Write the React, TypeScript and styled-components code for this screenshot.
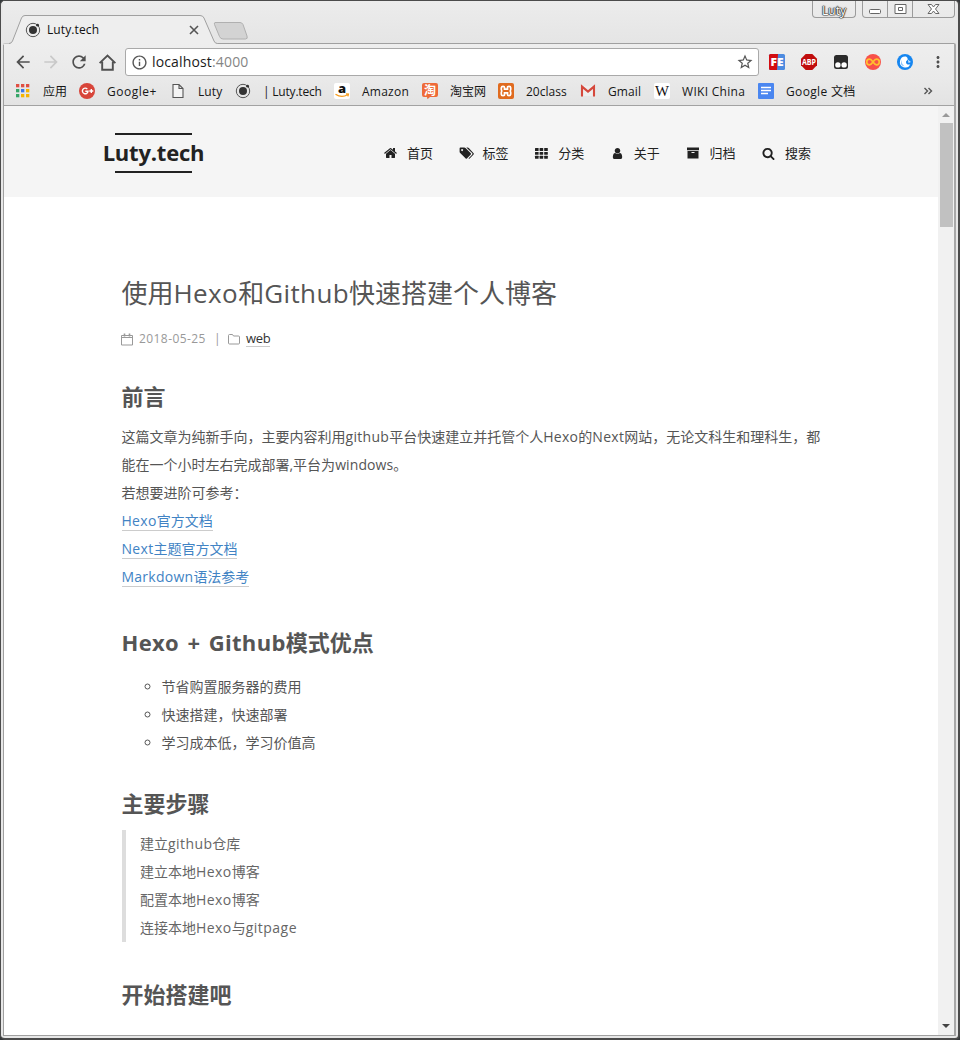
import React from 'react';
import styled, { createGlobalStyle } from 'styled-components';
import { MdArrowBack, MdArrowForward, MdRefresh, MdInfoOutline, MdStarBorder, MdMoreVert } from 'react-icons/md';

const GlobalStyle = createGlobalStyle`
  * { box-sizing: border-box; }
  html, body { margin: 0; padding: 0; }
  body {
    background: #34383a;
    font-family: "Open Sans", "Noto Sans CJK SC", sans-serif;
    overflow: hidden;
  }
  svg { display: block; flex: none; overflow: visible; }
`;

const Window = styled.div`
  width: 960px;
  height: 1040px;
  background: #e7e7e7;
  border: 1px solid #4b4b4b;
  border-right-width: 2px;
  border-bottom-width: 2px;
  border-radius: 5px;
  display: flex;
  flex-direction: column;
  padding: 0 2px 2px;
  overflow: hidden;
`;

const TitleBar = styled.div`
  height: 42px;
  display: flex;
  align-items: flex-start;
  flex: none;
  background: linear-gradient(#ececec, #e5e5e5);
`;

const TabArea = styled.div`
  position: relative;
  width: 250px;
  height: 43px;
  z-index: 1;
`;

const TabShape = styled.svg`
  position: absolute;
  left: 0;
  top: 0;
`;

const TabContent = styled.div`
  position: relative;
  display: flex;
  align-items: center;
  padding: 20px 0 0 22px;
  height: 38px;
`;

const TabTitle = styled.span`
  flex: none;
  width: 142px;
  margin-left: 6px;
  font-size: 12px;
  line-height: 18px;
  color: #111;
  letter-spacing: 0.1px;
`;

const Spacer = styled.div`
  flex: 1;
`;

const UserButton = styled.div`
  width: 44px;
  height: 17px;
  margin-right: 6px;
  border: 1px solid #9b9b9b;
  border-top: 0;
  border-radius: 0 0 4px 4px;
  font-size: 12px;
  line-height: 19px;
  text-align: center;
  color: #fff;
  text-shadow: 0 0 1px #222, 0 0 1px #222, 0 0 1px #222, 0 0 1px #222, 0 0 2px #444;
`;

const Controls = styled.div`
  display: flex;
  height: 17px;
  margin-right: 1px;
  border: 1px solid #9b9b9b;
  border-top: 0;
  border-radius: 0 0 4px 4px;
`;

const Control = styled.div<{ $w: number }>`
  width: ${p => p.$w}px;
  display: flex;
  justify-content: center;
  padding-top: 2px;
  & + & { border-left: 1px solid #9b9b9b; }
`;

const Frame = styled.div`
  flex: 1;
  min-height: 0;
  display: flex;
  flex-direction: column;
  border: 1px solid #a0a0a0;
  border-right: 2px solid #a8a8a8;
  background: #ebebeb;
  border-radius: 2px 2px 0 0;
`;

const Toolbar = styled.div`
  display: flex;
  align-items: center;
  height: 36px;
  padding-left: 9px;
  flex: none;
  color: #4f4f4f;
  background: linear-gradient(#eeeeee, #e9e9e9);
`;

const ToolButton = styled.div<{ $dim?: boolean; $inset?: number }>`
  width: 28px;
  height: 20px;
  display: flex;
  align-items: center;
  padding-left: ${p => p.$inset ?? 0}px;
  color: ${p => (p.$dim ? '#c9c9c9' : '#505050')};
`;

const AddressBar = styled.div`
  width: 634px;
  height: 28px;
  display: flex;
  align-items: center;
  background: #fff;
  border: 1px solid #a9a9a9;
  border-radius: 3px;
  padding: 0 4px 0 5px;
  color: #555;
`;

const Url = styled.div`
  flex: 1;
  margin-left: 4px;
  font-size: 14px;
  line-height: 24px;
  letter-spacing: 0.15px;
  color: #1b1b1b;
  span { color: #858585; }
`;

const Extensions = styled.div`
  display: flex;
  gap: 16px;
  margin-left: 10px;
  align-items: center;
`;

const Bookmarks = styled.div`
  display: flex;
  align-items: center;
  height: 26px;
  padding: 0 0 4px 11px;
  flex: none;
  border-bottom: 1px solid #a2a2a2;
  background: linear-gradient(#e9e9e9, #e3e3e3);
`;

const Bookmark = styled.div<{ $w: number }>`
  width: ${p => p.$w}px;
  display: flex;
  align-items: center;
  gap: 12px;
  flex: none;
  height: 20px;
`;

const BookmarkLabel = styled.span<{ $ls?: number }>`
  font-size: 12px;
  line-height: 18px;
  padding-top: 2px;
  white-space: nowrap;
  color: #161616;
  letter-spacing: ${p => p.$ls ?? 0}px;
`;

const Viewport = styled.div`
  flex: 1;
  min-height: 0;
  display: flex;
  background: #fff;
`;

const Page = styled.div`
  width: 934px;
  display: flex;
  flex-direction: column;
`;

const Scrollbar = styled.div`
  flex: 1;
  background: #f1f1f1;
  display: flex;
  flex-direction: column;
  align-items: center;
  justify-content: space-between;
  padding-bottom: 7px;
`;

const ScrollTop = styled.div`
  display: flex;
  flex-direction: column;
  align-items: center;
  padding-top: 7px;
`;

const Thumb = styled.div`
  width: 13px;
  height: 104px;
  margin-top: 6px;
  background: #c1c1c1;
`;

const Header = styled.header`
  height: 91px;
  flex: none;
  background: #f5f5f5;
  display: flex;
  padding: 27px 0 0 99px;
`;

const Brand = styled.div`
  width: 101px;
  display: flex;
  flex-direction: column;
  align-items: center;
`;

const BrandLine = styled.div`
  width: 77px;
  height: 2px;
  background: #222;
`;

const BrandName = styled.div`
  font-size: 22px;
  font-weight: 700;
  height: 36px;
  line-height: 34px;
  color: #222;
  white-space: nowrap;
  letter-spacing: -0.2px;
`;

const Nav = styled.nav`
  display: flex;
  margin: 11px 0 0 177.5px;
`;

const NavItem = styled.a`
  width: 75.6px;
  height: 18px;
  display: flex;
  align-items: center;
  gap: 7.5px;
  font-size: 13px;
  line-height: 18px;
  color: #222;
`;

const NavIcon = styled.span`
  width: 18px;
  display: flex;
  justify-content: center;
`;

const Article = styled.article`
  padding: 76px 0 0 117.5px;
  color: #555;
  font-size: 14px;
  line-height: 28px;
`;

const Latin = styled.span<{ $ls?: number }>`
  letter-spacing: ${p => p.$ls ?? 0.3}px;
`;

const Title = styled.h1`
  margin: 0;
  font-size: 26px;
  font-weight: 400;
  line-height: 40px;
  color: #555;
  white-space: nowrap;
`;

const Meta = styled.div`
  display: flex;
  align-items: center;
  height: 20px;
  margin-top: 16px;
  margin-left: -0.5px;
  font-size: 12px;
  line-height: 16px;
  color: #999;
`;

const MetaDate = styled.span`
  margin-left: 6px;
  width: 75px;
  letter-spacing: 0.42px;
`;

const MetaDivider = styled.span`
  width: 14px;
`;

const Category = styled.a`
  margin-left: 6px;
  color: #333;
  font-size: 13px;
  height: 16px;
  line-height: 14px;
  letter-spacing: -0.3px;
  border-bottom: 1px solid #ccc;
`;

const Heading = styled.h2<{ $top: number; $bottom: number }>`
  margin: ${p => p.$top}px 0 ${p => p.$bottom}px;
  font-size: 22px;
  font-weight: 700;
  line-height: 33px;
  word-spacing: 2.5px;
  color: #555;
`;

const Text = styled.p`
  margin: 0;
  white-space: nowrap;
`;

const Link = styled.a`
  display: block;
  width: max-content;
  height: 20px;
  margin: 4px 0 8px;
  line-height: 20px;
  color: #4183c4;
  border-bottom: 1px solid #ccc;
`;

const List = styled.ul`
  margin: 0;
  padding-left: 40px;
  list-style: circle;
`;

const Quote = styled.blockquote`
  margin: 0;
  padding-left: 14.6px;
  border-left: 4px solid #ddd;
  color: #666;
`;

const LutyIcon = () => (
  <svg width="16" height="16" viewBox="0 0 16 16">
    <circle cx="8" cy="8" r="6.7" fill="none" stroke="#555" strokeWidth="1" />
    <circle cx="8" cy="8" r="4" fill="#333" />
    <circle cx="12.6" cy="3.2" r="1.4" fill="#333" />
  </svg>
);

const HomeOutline = () => (
  <svg width="17" height="17" viewBox="0 0 16 16" fill="none" stroke="#505050" strokeWidth="1.8">
    <path d="M.6 8.600 8 1.500l7.400 7.100M3 7.200v7.600h10V7.200" />
  </svg>
);

const appColors = ['#e04f43', '#e04f43', '#e04f43', '#35a567', '#3b78e7', '#f5b400', '#35a567', '#f5b400', '#f5b400'];
const AppsIcon = () => (
  <svg width="16" height="16" viewBox="0 0 16 16">
    {appColors.map((c, i) => (
      <rect key={i} x={1 + (i % 3) * 5} y={1 + Math.floor(i / 3) * 5} width="3.3" height="3.3" fill={c} />
    ))}
  </svg>
);

const GPlusIcon = () => (
  <svg width="16" height="16" viewBox="0 0 16 16">
    <circle cx="8" cy="8" r="8" fill="#d8453a" />
    <path d="M8.300 6.100a2.800 2.800 0 1 0 .7 2.100H6.300M10.300 8h4M12.300 6v4" fill="none" stroke="#fff" strokeWidth="1.400" />
  </svg>
);

const FileIcon = () => (
  <svg width="16" height="16" viewBox="0 0 16 16">
    <path d="M3 1.500h6l4 4v9H3zM9 1.500v4h4" fill="#f4f4f4" stroke="#555" strokeWidth="1.100" />
  </svg>
);

const AmazonIcon = () => (
  <svg width="16" height="16" viewBox="0 0 16 16">
    <rect width="16" height="16" rx="2" fill="#fff" />
    <text x="8" y="9.800" textAnchor="middle" fontFamily="Open Sans" fontWeight="800" fontSize="13" fill="#111">a</text>
    <path d="M1.500 11.200q6 4.200 12 .6M12 10.800l2.400.3-.5 2.200" fill="none" stroke="#f79c1c" strokeWidth="1.300" />
  </svg>
);

const TaobaoIcon = () => (
  <svg width="16" height="16" viewBox="0 0 16 16">
    <path d="M2 0h12q2 0 2 2v10q0 2-2 2H8l-2.500 2.200L5 14H2q-2 0-2-2V2q0-2 2-2z" fill="#ee6a38" />
    <text x="8" y="11.500" textAnchor="middle" fontFamily="Noto Sans CJK SC" fontWeight="700" fontSize="12" fill="#fff">淘</text>
  </svg>
);

const XamppIcon = () => (
  <svg width="16" height="16" viewBox="0 0 16 16">
    <rect width="16" height="16" rx="2" fill="#e06b1f" />
    <path d="M6.500 6.200V4.500Q6.500 3.300 5 3.300T3.300 4.800v1.700q0 1.500 1.200 1.500-1.200 0-1.200 1.500v1.700q0 1.500 1.700 1.500t1.500-1.200V9.800h3v1.700q0 1.200 1.500 1.200t1.700-1.500V9.500q0-1.500-1.200-1.500 1.200 0 1.200-1.500V4.800q0-1.500-1.700-1.500T9.500 4.500v1.700z" fill="none" stroke="#fff" strokeWidth="1.700" />
  </svg>
);

const GmailIcon = () => (
  <svg width="16" height="16" viewBox="0 0 16 16">
    <path d="M2 3h12v10H2z" fill="#eee" />
    <path d="M2 13.500V3.600l6 5 6-5v9.900" fill="none" stroke="#d5483c" strokeWidth="2.100" />
  </svg>
);

const WikiIcon = () => (
  <svg width="16" height="16" viewBox="0 0 16 16">
    <rect width="16" height="16" rx="2" fill="#fff" />
    <text x="8" y="12.500" textAnchor="middle" fontFamily="Liberation Serif" fontSize="14" textLength="14" lengthAdjust="spacingAndGlyphs" fill="#111">W</text>
  </svg>
);

const DocsIcon = () => (
  <svg width="16" height="16" viewBox="0 0 16 16">
    <rect width="16" height="16" rx="1" fill="#4a86f0" />
    <path d="M3 4.500h10M3 7.500h10M3 10.500h7" stroke="#fff" strokeWidth="1.300" />
  </svg>
);

const FeIcon = () => (
  <svg width="16" height="16" viewBox="0 0 16 16">
    <rect width="16" height="16" rx="1.500" fill="#4d8be0" />
    <path d="M1.500 0H9l-1 16H1.500Q0 16 0 14.500v-13Q0 0 1.500 0z" fill="#d30d12" />
    <text x="8" y="12" textAnchor="middle" fontFamily="Open Sans" fontWeight="800" fontSize="11" textLength="13" lengthAdjust="spacingAndGlyphs" fill="#fff">FE</text>
  </svg>
);

const AbpIcon = () => (
  <svg width="16" height="16" viewBox="0 0 16 16">
    <path d="M4.700 0h6.600L16 4.700v6.600L11.300 16H4.700L0 11.300V4.700z" fill="#c00d0d" />
    <text x="8" y="10.900" textAnchor="middle" fontFamily="Open Sans" fontWeight="700" fontSize="8" textLength="14" lengthAdjust="spacingAndGlyphs" fill="#fff">ABP</text>
  </svg>
);

const MonkeyIcon = () => (
  <svg width="16" height="16" viewBox="0 0 16 16">
    <rect x="1" y="1" width="14" height="14" rx="2.500" fill="#2b2b2b" />
    <circle cx="4.900" cy="10.900" r="2.700" fill="#fff" />
    <circle cx="11.100" cy="10.900" r="2.700" fill="#fff" />
  </svg>
);

const InfinityIcon = () => (
  <svg width="16" height="16" viewBox="0 0 16 16">
    <circle cx="8" cy="8" r="8" fill="#f8504a" />
    <path d="M8 8C6.800 6.300 6 5.200 4.500 5.200a2.800 2.800 0 0 0 0 5.600C6 10.800 6.800 9.700 8 8s2-2.800 3.500-2.800a2.800 2.800 0 0 1 0 5.600C10 10.800 9.200 9.700 8 8z" fill="none" stroke="#ffc02e" strokeWidth="1.700" />
  </svg>
);

const BirdIcon = () => (
  <svg width="16" height="16" viewBox="0 0 16 16">
    <circle cx="8" cy="8" r="8" fill="#1686f0" />
    <path d="M9 2.500a5.500 5.500 0 1 0 4.300 8H10.500Q8.500 9.500 9 7.500l1.800-2q0-2-1.800-3z" fill="#fff" />
    <path d="M6 3.500q-3.500 4.500 1.500 9Q1 11 6 3.500z" fill="#8cc5fb" />
    <path d="M10.800 5.500 14 8l-2.500 1z" fill="#bfe0ff" />
  </svg>
);

const FaHome = () => (
  <svg width="14" height="14" viewBox="0 0 1792 1792" fill="#222">
    <path d="M1408 992v480q0 26-19 45t-45 19h-384v-384h-256v384h-384q-26 0-45-19t-19-45v-480q0-1 .5-3t.5-3l575-474 575 474q1 2 1 6zm223-69l-62 74q-8 9-21 11h-3q-13 0-21-7l-692-577-692 577q-12 8-24 7-13-2-21-11l-62-74q-8-10-7-23.500t11-21.500l719-599q32-26 76-26t76 26l244 204v-195q0-14 9-23t23-9h192q14 0 23 9t9 23v408l219 182q10 8 11 21.500t-7 23.500z" />
  </svg>
);

const FaTags = () => (
  <svg width="15" height="14" viewBox="0 0 15 14" fill="#222">
    <path fillRule="evenodd" d="M1.500 1.500h3.800q.7 0 1.200.5l5.300 5.300q.6.600 0 1.200l-3.900 3.900q-.6.600-1.200 0L1.200 7Q.600 6.400.6 5.700V2.400q0-.9.9-.9zM3.100 3a1 1 0 1 0 .01 0zM7.300 1.500h1.300q.7 0 1.200.5L14.600 7.300q.6.600 0 1.200l-3.900 3.900q-.6.500-1.200.1l3.600-3.800q.8-.8 0-1.600z" />
  </svg>
);

const FaTh = () => (
  <svg width="13" height="11" viewBox="0 0 13 11" fill="#222">
    {[0, 1, 2, 3, 4, 5, 6, 7, 8].map(i => (
      <rect key={i} x={(i % 3) * 4.600} y={Math.floor(i / 3) * 3.900} width="3.600" height="2.900" rx=".5" />
    ))}
  </svg>
);

const FaUser = () => (
  <svg width="13" height="13" viewBox="0 0 1792 1792" fill="#222">
    <path d="M1536 1399q0 109-62.500 187t-150.500 78h-854q-88 0-150.500-78t-62.500-187q0-85 8.500-160.500t31.500-152 58.500-131 94-89 134.500-34.500q131 128 313 128t313-128q76 0 134.500 34.500t94 89 58.500 131 31.500 152 8.500 160.500zm-256-887q0 159-112.500 271.500t-271.500 112.500-271.500-112.500-112.500-271.500 112.500-271.500 271.500-112.500 271.500 112.500 112.500 271.500z" />
  </svg>
);

const FaArchive = () => (
  <svg width="12" height="12" viewBox="0 0 12 12" fill="#222">
    <path fillRule="evenodd" d="M0 .5h12v2.800H0zM.5 4h11v7.500H.5zM4.500 4.900v1h3v-1z" />
  </svg>
);

const FaSearch = () => (
  <svg width="13" height="13" viewBox="0 0 1792 1792" fill="#222">
    <path d="M1216 832q0-185-131.500-316.500t-316.500-131.500-316.500 131.500-131.500 316.500 131.500 316.500 316.500 131.500 316.500-131.500 131.500-316.500zm512 832q0 52-38 90t-90 38q-54 0-90-38l-343-342q-179 124-399 124-143 0-273.500-55.500t-225-150-150-225-55.500-273.500 55.500-273.500 150-225 225-150 273.500-55.500 273.500 55.500 225 150 150 225 55.500 273.500q0 220-124 399l343 343q37 37 37 90z" />
  </svg>
);

const bookmarks = [
  { icon: <AppsIcon />, label: '应用', w: 64, ls: 0 },
  { icon: <GPlusIcon />, label: 'Google+', w: 91, ls: 0.5 },
  { icon: <FileIcon />, label: 'Luty', w: 65, ls: 0.1 },
  { icon: <LutyIcon />, label: '| Luty.tech', w: 99, ls: -0.2 },
  { icon: <AmazonIcon />, label: 'Amazon', w: 88, ls: 0.25 },
  { icon: <TaobaoIcon />, label: '淘宝网', w: 76, ls: 0 },
  { icon: <XamppIcon />, label: '20class', w: 82, ls: 0 },
  { icon: <GmailIcon />, label: 'Gmail', w: 74, ls: 0.1 },
  { icon: <WikiIcon />, label: 'WIKI China', w: 104, ls: 0.3 },
  { icon: <DocsIcon />, label: 'Google 文档', w: 165, ls: 0.35 },
];

const navItems = [
  { icon: <FaHome />, label: '首页' },
  { icon: <FaTags />, label: '标签' },
  { icon: <FaTh />, label: '分类' },
  { icon: <FaUser />, label: '关于' },
  { icon: <FaArchive />, label: '归档' },
  { icon: <FaSearch />, label: '搜索' },
];

export default function App() {
  return (
    <>
      <GlobalStyle />
      <Window>
        <TitleBar>
          <TabArea>
            <TabShape width="250" height="43" viewBox="0 0 250 43">
              <path d="M0 43.500V42.500H6Q8.500 42.500 9.500 40L18.500 17Q19.500 14.500 22 14.500H197Q200 14.500 201 17L211 40Q212 42.500 214.500 42.500V43.500z" fill="#eeeeee" />
              <path d="M6 42.500Q8.500 42.500 9.500 40L18.500 17Q19.500 14.500 22 14.500H197Q200 14.500 201 17L211 40Q212 42.500 214.500 42.500" fill="none" stroke="#a0a0a0" />
              <path d="M212 21.500h25q2 0 3 2l4 11.500q1 3-1.500 3H220q-2.500 0-3.500-2.500l-5-12q-.5-2 .5-2z" fill="#d3d3d3" stroke="#b0b0b0" />
            </TabShape>
            <TabContent>
              <LutyIcon />
              <TabTitle>Luty.tech</TabTitle>
              <svg width="10" height="10" viewBox="0 0 10 10" stroke="#555" strokeWidth="1.600"><path d="M1 1l8 8M9 1l-8 8" /></svg>
            </TabContent>
          </TabArea>
          <Spacer />
          <UserButton>Luty</UserButton>
          <Controls>
            <Control $w={24}>
              <svg width="14" height="13" viewBox="0 0 14 13"><rect x="1.500" y="6.500" width="11" height="4" rx="1" fill="#fff" stroke="#666" /></svg>
            </Control>
            <Control $w={25}>
              <svg width="13" height="12" viewBox="0 0 13 12"><path d="M1 1.500h11v9H1zM4.500 4.500h4v3h-4z" fill="#fff" stroke="#666" /></svg>
            </Control>
            <Control $w={42}>
              <svg width="13" height="12" viewBox="0 0 13 12"><path d="M1 1.500h3.500l2 2.500 2-2.500H12L8.500 6l3.500 4.500H8.500L6.500 8l-2 2.500H1L4.500 6z" fill="#fff" stroke="#666" /></svg>
            </Control>
          </Controls>
        </TitleBar>
        <Frame>
          <Toolbar>
            <ToolButton><MdArrowBack size={20} /></ToolButton>
            <ToolButton $dim><MdArrowForward size={20} /></ToolButton>
            <ToolButton><MdRefresh size={20} /></ToolButton>
            <ToolButton $inset={2}><HomeOutline /></ToolButton>
            <AddressBar>
              <MdInfoOutline size={17} />
              <Url>localhost<span>:4000</span></Url>
              <MdStarBorder size={18} />
            </AddressBar>
            <Extensions>
              <FeIcon />
              <AbpIcon />
              <MonkeyIcon />
              <InfinityIcon />
              <BirdIcon />
              <MdMoreVert size={18} />
            </Extensions>
          </Toolbar>
          <Bookmarks>
            {bookmarks.map(b => (
              <Bookmark key={b.label} $w={b.w}>
                {b.icon}
                <BookmarkLabel $ls={b.ls}>{b.label}</BookmarkLabel>
              </Bookmark>
            ))}
            <svg width="10" height="8" viewBox="0 0 10 8" fill="none" stroke="#555" strokeWidth="1.400"><path d="M1.500 1l3 3-3 3M5.500 1l3 3-3 3" /></svg>
          </Bookmarks>
          <Viewport>
            <Page>
              <Header>
                <Brand>
                  <BrandLine />
                  <BrandName>Luty.tech</BrandName>
                  <BrandLine />
                </Brand>
                <Nav>
                  {navItems.map(n => (
                    <NavItem key={n.label}>
                      <NavIcon>{n.icon}</NavIcon>
                      {n.label}
                    </NavItem>
                  ))}
                </Nav>
              </Header>
              <Article>
                <Title>使用<Latin $ls={0.4}>Hexo</Latin>和<Latin $ls={0.4}>Github</Latin>快速搭建个人博客</Title>
                <Meta>
                  <svg width="12" height="13" viewBox="0 0 12 13" fill="none" stroke="#999"><path d="M.5 2.500h11v9.500H.5zM.5 4.500h11" /><path d="M3.500.5v3M8.500.5v3" strokeWidth="1.600" /></svg>
                  <MetaDate>2018-05-25</MetaDate>
                  <MetaDivider>|</MetaDivider>
                  <svg width="12" height="11" viewBox="0 0 12 11" fill="none" stroke="#999"><path d="M1.500.5h3l1 1.500h5q1 0 1 1v6q0 1-1 1h-9q-1 0-1-1v-7.500q0-1 1-1z" /></svg>
                  <Category>web</Category>
                </Meta>
                <Heading $top={31} $bottom={10}>前言</Heading>
                <Text>
                  这篇文章为纯新手向，主要内容利用<Latin>github</Latin>平台快速建立并托管个人<Latin>Hexo</Latin>的<Latin>Next</Latin>网站，无论文科生和理科生，都<br />
                  能在一个小时左右完成部署,平台为<Latin $ls={0.1}>windows</Latin>。<br />
                  若想要进阶可参考：
                </Text>
                <Link><Latin>Hexo</Latin>官方文档</Link>
                <Link><Latin>Next</Latin>主题官方文档</Link>
                <Link><Latin $ls={0.25}>Markdown</Latin>语法参考</Link>
                <Heading $top={39} $bottom={14}><Latin>Hexo + Github</Latin>模式优点</Heading>
                <List>
                  <li>节省购置服务器的费用</li>
                  <li>快速搭建，快速部署</li>
                  <li>学习成本低，学习价值高</li>
                </List>
                <Heading $top={30} $bottom={10}>主要步骤</Heading>
                <Quote>
                  建立<Latin $ls={0.4}>github</Latin>仓库<br />
                  建立本地<Latin $ls={0.4}>Hexo</Latin>博客<br />
                  配置本地<Latin $ls={0.4}>Hexo</Latin>博客<br />
                  连接本地<Latin $ls={0.4}>Hexo</Latin>与<Latin $ls={0.5}>gitpage</Latin>
                </Quote>
                <Heading $top={36} $bottom={0}>开始搭建吧</Heading>
              </Article>
            </Page>
            <Scrollbar>
              <ScrollTop>
                <svg width="8" height="4" viewBox="0 0 8 4"><path d="M0 4l4-4 4 4z" fill="#999" /></svg>
                <Thumb />
              </ScrollTop>
              <svg width="8" height="4" viewBox="0 0 8 4"><path d="M0 0l4 4 4-4z" fill="#444" /></svg>
            </Scrollbar>
          </Viewport>
        </Frame>
      </Window>
    </>
  );
}
